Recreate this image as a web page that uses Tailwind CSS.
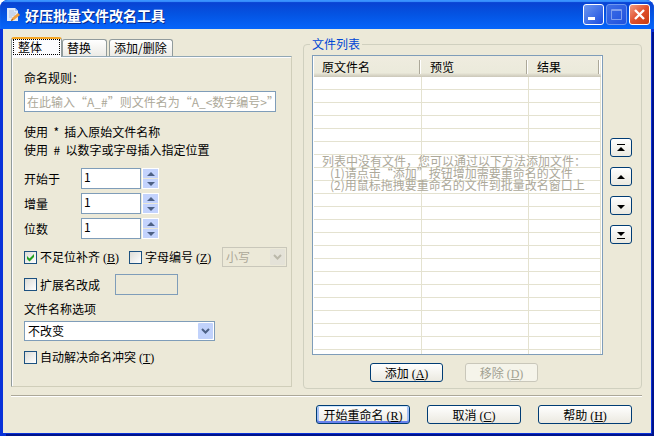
<!DOCTYPE html>
<html lang="zh-CN">
<head>
  <meta charset="UTF-8">
  <meta name="viewport" content="width=device-width, initial-scale=1">
  <title>好压批量文件改名工具</title>
  <script src="https://cdn.jsdelivr.net/npm/@tailwindcss/browser@4"></script>
</head>
<body class="bg-white font-['Noto_Sans_CJK_SC',sans-serif] text-[12px] leading-4 text-black">
  <div class="min-h-screen flex flex-col rounded-t-lg overflow-hidden bg-[#0831d9]">

    <!-- Barra de título -->
    <header class="h-[29px] shrink-0 flex items-center pl-[7px] pr-1 gap-[5px] bg-linear-to-b from-[#0a3fd0] via-[#0454e3] to-[#0665fb] shadow-[inset_0_2px_1px_#3a93ff]">
      <svg class="w-[13px] h-[15px]" viewBox="0 0 13 15">
        <path d="M0 1h8l3 3v10H0z" fill="#dfeafa"/>
        <path d="M8 1v3h3z" fill="#a9c6ee"/>
        <path d="M2 4h5M2 6h7M2 8h6M2 10h3" stroke="#a3b8d6" stroke-width=".8"/>
        <path d="M11 6l2 2-6 5-3 1 1-3z" fill="#f0a040"/>
        <path d="M4 14l1-2 1 1z" fill="#5a3a1c"/>
      </svg>
      <h1 class="flex-1 text-[14px] font-bold text-white [text-shadow:1px_1px_#0a2a8a]">好压批量文件改名工具</h1>
      <div class="flex gap-[2px]">
        <button aria-label="最小化" class="size-[21px] rounded-[3px] border border-white bg-linear-to-br from-[#6d95ee] to-[#1c4be0]">
          <svg viewBox="0 0 19 19"><rect x="4" y="12" width="7" height="3" fill="#fff"/></svg>
        </button>
        <button aria-label="最大化" disabled class="size-[21px] rounded-[3px] border border-[#6f98f0] bg-linear-to-br from-[#3f6fe6] to-[#1f50de]">
          <svg viewBox="0 0 19 19"><path d="M4.500 4.500h10v10h-10zM4 5.500h11" fill="none" stroke="#7f9fee"/></svg>
        </button>
        <button aria-label="关闭" class="size-[21px] rounded-[3px] border border-white bg-linear-to-br from-[#f09a80] via-[#e0502c] to-[#c83c10]">
          <svg viewBox="0 0 19 19"><path d="M5 5l9 9M14 5l-9 9" stroke="#fff" stroke-width="2.400"/></svg>
        </button>
      </div>
    </header>

    <main class="flex-1 flex flex-col mx-[3px] mb-[3px] pl-2 pr-[9px] pt-2 bg-[#ece9d8] shadow-[1px_1px_#0831d9,3px_3px_#00138c]">
      <div class="flex gap-[11px]">

        <!-- Painel esquerdo -->
        <section class="w-[281px] shrink-0 flex flex-col pb-[2px]">
          <div role="tablist" class="flex items-end h-[19px]">
            <button role="tab" aria-selected="true" class="relative z-10 h-5 -mb-px w-[51px] rounded-t-[3px] border-x border-[#919b9c] border-t-2 border-t-[#f5a623] bg-[#fcfcfe] pl-[6px] pb-[2px] text-left leading-4 after:absolute after:inset-x-px after:top-0 after:bottom-[2px] after:border after:border-dotted after:border-black">整体</button>
            <button role="tab" class="h-[17px] w-[45px] rounded-t-[3px] border border-b-0 border-[#919b9c] bg-linear-to-b from-white to-[#ecebe6] pl-1 text-left">替换</button>
            <button role="tab" class="h-[17px] w-16 ml-[2px] rounded-t-[3px] border border-b-0 border-[#919b9c] bg-linear-to-b from-white to-[#ecebe6] pl-1 text-left whitespace-nowrap">添加/删除</button>
          </div>
          <div class="flex-1 border border-t-[#91a7b4] border-l-[#919b9c] border-r-[#d0ceba] border-b-[#d0ceba] pl-3 pr-1 pt-[13px] shadow-[inset_1px_1px_#fcfcfe]">
            <label for="regra" class="block">命名规则：</label>
            <input id="regra" type="text" placeholder="在此输入“A_#”则文件名为“A_&lt;数字编号&gt;”" class="mt-[5px] block w-[252px] h-[21px] border border-[#7f9db9] bg-white pl-[2px] placeholder:text-[#aca899]">
            <p class="mt-[11px] leading-[18px]">使用&nbsp; *&nbsp; 插入原始文件名称</p>
            <p class="leading-[18px]">使用&nbsp; #&nbsp; 以数字或字母插入指定位置</p>

            <div class="mt-[9px] flex flex-col gap-1">
              <div class="flex items-center h-[21px]">
                <label for="inicio" class="w-[57px]">开始于</label>
                <input id="inicio" type="text" value="1" class="w-[60px] h-[21px] border border-[#7f9db9] bg-white pl-[2px] pb-1">
                <div class="ml-px flex flex-col gap-px w-[17px] h-[21px] border border-white">
                  <button aria-label="+" onclick="mudar('inicio', 1)" class="flex-1 flex items-center justify-center bg-[#c3d3fd]"><svg class="w-2 h-1" viewBox="0 0 8 4"><path d="M0 4L4 0l4 4z" fill="#4d6185"/></svg></button>
                  <button aria-label="-" onclick="mudar('inicio', -1)" class="flex-1 flex items-center justify-center bg-[#c3d3fd]"><svg class="w-2 h-1" viewBox="0 0 8 4"><path d="M0 0h8L4 4z" fill="#4d6185"/></svg></button>
                </div>
              </div>
              <div class="flex items-center h-[21px]">
                <label for="passo" class="w-[57px]">增量</label>
                <input id="passo" type="text" value="1" class="w-[60px] h-[21px] border border-[#7f9db9] bg-white pl-[2px] pb-1">
                <div class="ml-px flex flex-col gap-px w-[17px] h-[21px] border border-white">
                  <button aria-label="+" onclick="mudar('passo', 1)" class="flex-1 flex items-center justify-center bg-[#c3d3fd]"><svg class="w-2 h-1" viewBox="0 0 8 4"><path d="M0 4L4 0l4 4z" fill="#4d6185"/></svg></button>
                  <button aria-label="-" onclick="mudar('passo', -1)" class="flex-1 flex items-center justify-center bg-[#c3d3fd]"><svg class="w-2 h-1" viewBox="0 0 8 4"><path d="M0 0h8L4 4z" fill="#4d6185"/></svg></button>
                </div>
              </div>
              <div class="flex items-center h-[21px]">
                <label for="digitos" class="w-[57px]">位数</label>
                <input id="digitos" type="text" value="1" class="w-[60px] h-[21px] border border-[#7f9db9] bg-white pl-[2px] pb-1">
                <div class="ml-px flex flex-col gap-px w-[17px] h-[21px] border border-white">
                  <button aria-label="+" onclick="mudar('digitos', 1)" class="flex-1 flex items-center justify-center bg-[#c3d3fd]"><svg class="w-2 h-1" viewBox="0 0 8 4"><path d="M0 4L4 0l4 4z" fill="#4d6185"/></svg></button>
                  <button aria-label="-" onclick="mudar('digitos', -1)" class="flex-1 flex items-center justify-center bg-[#c3d3fd]"><svg class="w-2 h-1" viewBox="0 0 8 4"><path d="M0 0h8L4 4z" fill="#4d6185"/></svg></button>
                </div>
              </div>
            </div>

            <div class="mt-2 flex items-center h-5">
              <label class="flex items-center gap-[3px] w-[105px] whitespace-nowrap">
                <span class="grid size-[13px]">
                  <input type="checkbox" checked class="peer col-start-1 row-start-1 appearance-none size-[13px] border border-[#1c5180] bg-linear-to-br from-[#dcdcd7] to-white">
                  <svg class="col-start-1 row-start-1 size-[13px] pointer-events-none invisible peer-checked:visible" viewBox="0 0 13 13"><path d="M3 5v3l2.500 2.500L10 6V3L5.500 7.500z" fill="#21a121"/></svg>
                </span>
                <span>不足位补齐<span class="ml-[3px] font-['Liberation_Serif',serif]">(<u>B</u>)</span></span>
              </label>
              <label class="flex items-center gap-[3px] whitespace-nowrap">
                <input type="checkbox" class="appearance-none size-[13px] border border-[#1c5180] bg-linear-to-br from-[#dcdcd7] to-white">
                <span>字母编号<span class="ml-[3px] font-['Liberation_Serif',serif]">(<u>Z</u>)</span></span>
              </label>
              <div class="relative ml-auto w-[65px]">
                <select aria-label="大小写" disabled class="block appearance-none w-full h-5 border border-[#c9c7ba] bg-[#ece9d8] pl-[3px] text-[#aca899] opacity-100">
                  <option>小写</option>
                </select>
                <svg class="absolute right-[2px] top-[2px] w-[15px] h-4 pointer-events-none" viewBox="0 0 15 16"><rect width="15" height="16" rx="1" fill="#e4e2d8"/><path d="M4 6l3.500 3.500L11 6" fill="none" stroke="#bab8aa" stroke-width="2"/></svg>
              </div>
            </div>

            <div class="mt-[7px] flex items-center h-[21px]">
              <label class="flex items-center gap-[3px] w-[91px]">
                <input type="checkbox" class="appearance-none size-[13px] border border-[#1c5180] bg-linear-to-br from-[#dcdcd7] to-white">
                <span>扩展名改成</span>
              </label>
              <input type="text" aria-label="扩展名" disabled class="w-[63px] h-[21px] border border-[#7f9db9] bg-[#ece9d8]">
            </div>

            <label for="opcoes" class="mt-[6px] block">文件名称选项</label>
            <div class="relative mt-1 w-[191px]">
              <select id="opcoes" class="block appearance-none w-full h-5 border border-[#7f9db9] bg-white pl-[3px]">
                <option>不改变</option>
              </select>
              <svg class="absolute right-[2px] top-[2px] w-[15px] h-4 pointer-events-none" viewBox="0 0 15 16"><rect width="15" height="16" rx="1" fill="#c1d2fb"/><path d="M4 6l3.500 3.500L11 6" fill="none" stroke="#4d6185" stroke-width="2"/></svg>
            </div>
            <label class="mt-2 flex items-center gap-[3px]">
              <input type="checkbox" class="appearance-none size-[13px] border border-[#1c5180] bg-linear-to-br from-[#dcdcd7] to-white">
              <span>自动解决命名冲突<span class="ml-[3px] font-['Liberation_Serif',serif]">(<u>T</u>)</span></span>
            </label>
          </div>
        </section>

        <!-- Lista de arquivos -->
        <fieldset class="flex-1 min-w-0 flex gap-[7px] rounded-[4px] border border-[#d0d0bf] pl-2 pr-[9px] pt-1 pb-[6px]">
          <legend class="px-[2px] -ml-[2px] leading-[14px] text-[#0046d5]">文件列表</legend>
          <div class="flex-1 min-w-0">
            <div class="relative h-[300px] overflow-hidden border border-[#7f9db9] bg-white px-px">
              <table class="w-full table-fixed border-separate border-spacing-0">
                <thead>
                  <tr class="h-[21px] bg-linear-to-b from-[#efecdf] from-10% via-[#ebeadb] via-80% to-[#cbc7b8]">
                    <th class="w-[108px] p-0 pl-2 text-left font-normal"><div class="flex items-center justify-between pr-px">原文件名<i class="w-[2px] h-[14px] border-l border-[#aca899] bg-white"></i></div></th>
                    <th class="w-[107px] p-0 pl-2 text-left font-normal"><div class="flex items-center justify-between pr-px">预览<i class="w-[2px] h-[14px] border-l border-[#aca899] bg-white"></i></div></th>
                    <th class="p-0 pl-2 text-left font-normal"><div class="flex items-center justify-between pr-px">结果<i class="w-[2px] h-[14px] border-l border-[#aca899] bg-white"></i></div></th>
                  </tr>
                </thead>
                <tbody id="linhas"></tbody>
              </table>
              <div class="absolute left-[9px] top-[99px] whitespace-nowrap leading-3 text-[#aca899]">
                <p>列表中没有文件，您可以通过以下方法添加文件：</p>
                <p class="pl-2">(1)请点击“添加”按钮增加需要重命名的文件</p>
                <p class="pl-2">(2)用鼠标拖拽要重命名的文件到批量改名窗口上</p>
              </div>
            </div>
            <div class="mt-2 flex justify-center gap-[22px] pr-[7px]">
              <button class="w-[73px] h-[19px] rounded-[3px] border border-[#003c74] bg-linear-to-b from-white to-[#ebe9e0] leading-[17px]">添加<span class="ml-[3px] font-['Liberation_Serif',serif]">(<u>A</u>)</span></button>
              <button disabled class="w-[73px] h-[19px] rounded-[3px] border border-[#c9c7ba] bg-[#f5f4ea] leading-[17px] text-[#a1a192]">移除<span class="ml-[3px] font-['Liberation_Serif',serif]">(<u>D</u>)</span></button>
            </div>
          </div>
          <div class="mt-[83px] flex flex-col gap-[10px]">
            <button aria-label="移到顶部" class="w-[22px] h-[19px] rounded-[3px] border border-[#003c74] bg-linear-to-b from-white to-[#ebe9e0]"><svg class="w-5 h-[17px]" viewBox="0 0 20 17"><path d="M6 5h8v1H6zM6 12h8l-4-4z"/></svg></button>
            <button aria-label="上移" class="w-[22px] h-[19px] rounded-[3px] border border-[#003c74] bg-linear-to-b from-white to-[#ebe9e0]"><svg class="w-5 h-[17px]" viewBox="0 0 20 17"><path d="M6 11h8l-4-4z"/></svg></button>
            <button aria-label="下移" class="w-[22px] h-[19px] rounded-[3px] border border-[#003c74] bg-linear-to-b from-white to-[#ebe9e0]"><svg class="w-5 h-[17px]" viewBox="0 0 20 17"><path d="M6 8h8l-4 4z"/></svg></button>
            <button aria-label="移到底部" class="w-[22px] h-[19px] rounded-[3px] border border-[#003c74] bg-linear-to-b from-white to-[#ebe9e0]"><svg class="w-5 h-[17px]" viewBox="0 0 20 17"><path d="M6 6h8l-4 4zM6 12h8v1H6z"/></svg></button>
          </div>
        </fieldset>
      </div>

      <!-- Botões de ação -->
      <footer class="mt-[6px] flex justify-end gap-[17px] border-t border-[#aca899] pt-[9px] pr-[10px] pb-[9px] shadow-[inset_0_1px_#fff]">
        <button class="w-[94px] h-[19px] rounded-[3px] border border-[#003c74] bg-linear-to-b from-white to-[#ebe9e0] leading-[17px] shadow-[inset_0_-2px_#6982ee,inset_0_1px_#cee7ff,inset_2px_0_#a5c0f5,inset_-2px_0_#a5c0f5]">开始重命名<span class="ml-[3px] font-['Liberation_Serif',serif]">(<u>R</u>)</span></button>
        <button class="w-[94px] h-[19px] rounded-[3px] border border-[#003c74] bg-linear-to-b from-white to-[#ebe9e0] leading-[17px]">取消<span class="ml-[3px] font-['Liberation_Serif',serif]">(<u>C</u>)</span></button>
        <button class="w-[94px] h-[19px] rounded-[3px] border border-[#003c74] bg-linear-to-b from-white to-[#ebe9e0] leading-[17px]">帮助<span class="ml-[3px] font-['Liberation_Serif',serif]">(<u>H</u>)</span></button>
      </footer>
    </main>
  </div>

  <script>
    // Linhas vazias da lista
    const linhas = document.getElementById('linhas');
    for (let i = 0; i < 22; i++) {
      const tr = document.createElement('tr');
      tr.innerHTML = '<td class="h-[13px] p-0 border-r border-b border-[#e4e2d0]"></td>'.repeat(3);
      linhas.appendChild(tr);
    }

    function mudar(id, valor) {
      const campo = document.getElementById(id);
      campo.value = Math.max(0, Number(campo.value) + valor);
    }
  </script>
</body>
</html>
